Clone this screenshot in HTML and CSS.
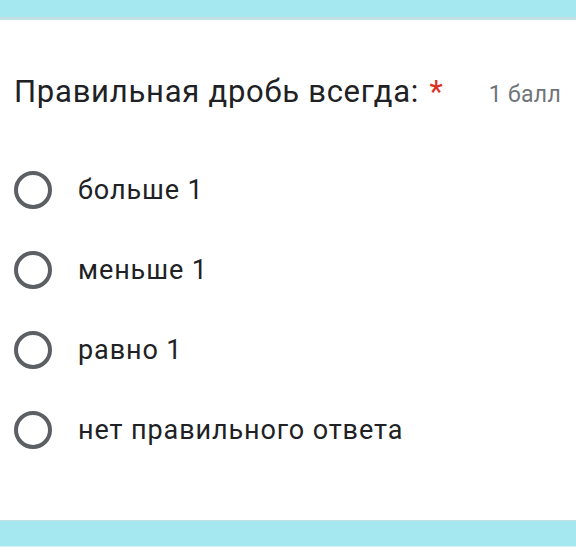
FILE: index.html
```html
<!DOCTYPE html>
<html lang="ru">
<head>
<meta charset="UTF-8">
<meta name="viewport" content="width=device-width, initial-scale=1.0">
<title>Вопрос</title>
<link rel="stylesheet" href="styles.css">
</head>
<body>
    <div class="band band-top"></div>

    <div class="card">
        <div class="question">
            <div class="title">Правильная дробь всегда: <span class="req">*</span></div>
            <div class="points">1 балл</div>
        </div>

        <div class="options">
            <label class="option"><span class="radio"></span>больше 1</label>
            <label class="option"><span class="radio"></span>меньше 1</label>
            <label class="option"><span class="radio"></span>равно 1</label>
            <label class="option"><span class="radio"></span>нет правильного ответа</label>
        </div>
    </div>

    <div class="band band-bottom"></div>
</body>
</html>
```

FILE: styles.css
```css
body {
    font-family: Roboto, "Noto Sans", sans-serif;
    background: #fff;
    color: #202124;
    margin: 0;
    padding: 0;
    height: 547px;
    display: flex;
    flex-direction: column;
    overflow: hidden;
}
.band {
    background: #a6e8f0;
}
.band-top {
    height: 17px;
    border-bottom: 3px solid #c3dfe3;
}
.band-bottom {
    height: 25px;
    border-top: 1px solid #bfe0e4;
    border-bottom: 1px solid #d6f2f5;
    margin-top: auto;
}
.card {
    padding: 0 15px 0 14px;
}
.question {
    display: flex;
    justify-content: space-between;
    align-items: baseline;
    padding-top: 52px;
}
.title {
    font-size: 31px;
    line-height: 40px;
    letter-spacing: 0.75px;
}
.req {
    color: #d93025;
    margin-left: 2px;
}
.points {
    font-size: 23px;
    color: #70757a;
    letter-spacing: 0.3px;
}
.options {
    display: flex;
    flex-direction: column;
    padding-top: 38px;
}
.option {
    display: flex;
    align-items: center;
    height: 80px;
    font-size: 27px;
    letter-spacing: 0.9px;
}
.radio {
    width: 30px;
    height: 30px;
    border: 4px solid #5c5f63;
    border-radius: 50%;
    margin-right: 26px;
}
```
